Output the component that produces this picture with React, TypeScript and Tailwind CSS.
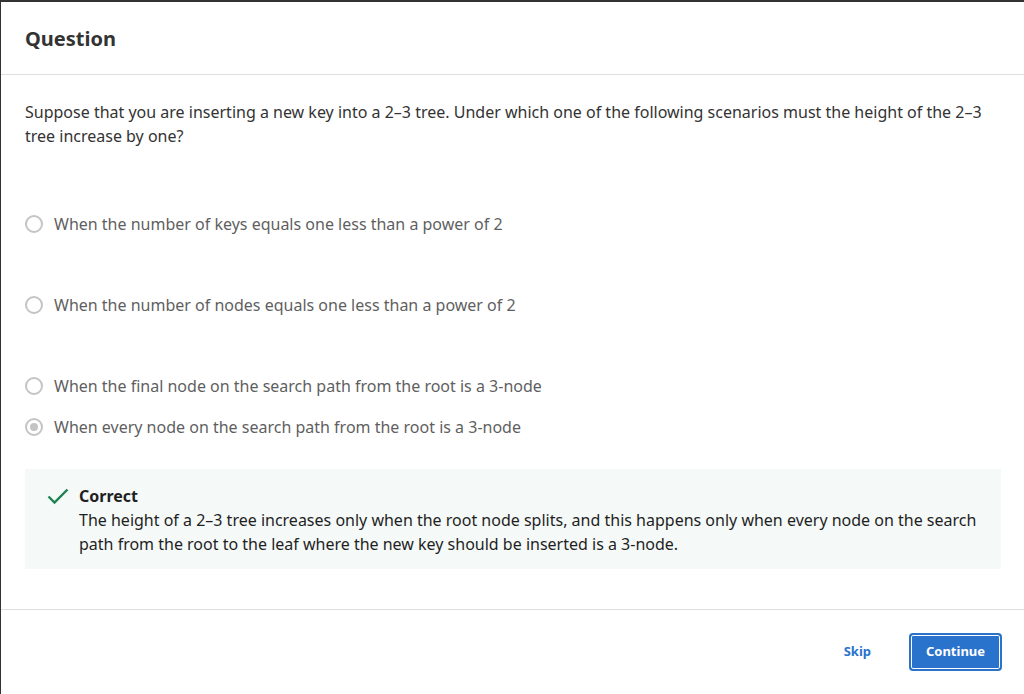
import React from 'react';

const options = [
  'When the number of keys equals one less than a power of 2',
  'When the number of nodes equals one less than a power of 2',
  'When the final node on the search path from the root is a 3-node',
  'When every node on the search path from the root is a 3-node',
];

const Radio = ({ checked }: { checked: boolean }) => (
  <span className="w-[18px] h-[18px] rounded-full border-2 border-[#c4c4c4] flex items-center justify-center shrink-0">
    {checked && <span className="w-[8px] h-[8px] rounded-full bg-[#c4c4c4]" />}
  </span>
);

const App = () => {
  return (
    <div
      className="w-[1024px] h-[694px] bg-white border-t-2 border-l border-[#333] flex flex-col overflow-hidden"
      style={{ fontFamily: '"Noto Sans", "Open Sans", sans-serif' }}
    >
      {/* Header */}
      <div className="h-[73px] flex items-center px-[24px] pt-[2px] border-b border-[#dedede] shrink-0">
        <h1 className="text-[20px] font-bold text-[#333] leading-[28px]">Question</h1>
      </div>

      {/* Body */}
      <div className="flex-1 pl-[24px] pr-[23px] pt-[25px]">
        <p className="text-[16px] leading-[24px] text-[#333]">
          Suppose that you are inserting a new key into a 2–3 tree. Under which one of the following scenarios must
          the height of the 2–3 tree increase by one?
        </p>

        <div className="mt-[64px] flex flex-col">
          {options.map((opt, i) => (
            <label
              key={opt}
              className={`flex items-center gap-[11px] h-[24px] text-[16px] leading-[24px] text-[#5f5f5f] ${
                i === 0 ? '' : i === 3 ? 'mt-[17px]' : 'mt-[57px]'
              }`}
            >
              <Radio checked={i === 3} />
              <span>{opt}</span>
            </label>
          ))}
        </div>

        <div className="mt-[30px] h-[100px] bg-[#f5f9f8] flex pt-[15px] pl-[22px]">
          <svg width="22" height="18" viewBox="0 0 22 18" className="mt-[3px] shrink-0">
            <polyline points="1.5,9.5 7.5,15.5 20.5,2.5" fill="none" stroke="#1e8253" strokeWidth="2.4" />
          </svg>
          <div className="ml-[10px] text-[16px] leading-[24px] text-[#1f1f1f]">
            <div className="font-bold">Correct</div>
            <div>
              The height of a 2–3 tree increases only when the root node splits, and this happens only when every node on the
              search path from the root to the leaf where the new key should be inserted is a 3-node.
            </div>
          </div>
        </div>
      </div>

      {/* Footer */}
      <div className="h-[85px] border-t border-[#dedede] flex items-start justify-end pr-[22px] pt-[23px] shrink-0">
        <button className="h-[38px] text-[13px] font-bold text-[#2a73cc] mr-[38px]">Skip</button>
        <button className="w-[93px] h-[38px] rounded-[4px] border-2 border-[#2a73cc] bg-[#2a73cc] shadow-[inset_0_0_0_1px_white] text-[13px] font-bold text-white">
          Continue
        </button>
      </div>
    </div>
  );
};

export default App;
